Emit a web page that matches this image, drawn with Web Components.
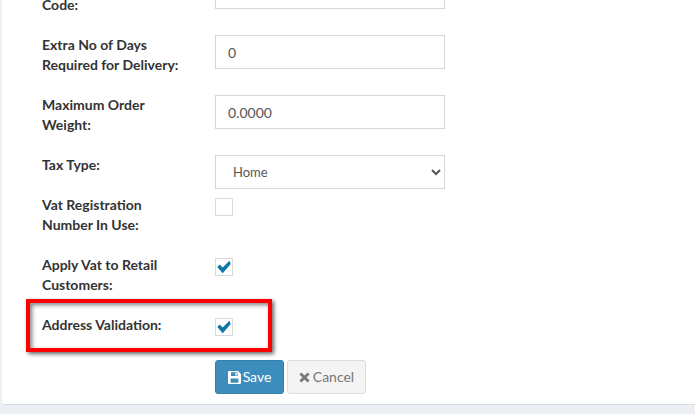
<!DOCTYPE html>
<html lang="en">
<head>
<meta charset="utf-8">
<title>Settings form</title>
<style>
  html, body { margin: 0; height: 414px; overflow: hidden; background: #ecf0f5; }
  body { font: 14px/20px Lato, "Noto Sans", sans-serif; color: #333; }
</style>
</head>
<body>
<form-card>
  <form-row tall><span class="low">Code:</span><text-field value=""></text-field></form-row>
  <form-row tall><span>Extra No of Days Required for Delivery:</span><text-field value="0"></text-field></form-row>
  <form-row tall><span>Maximum Order Weight:</span><text-field value="0.0000"></text-field></form-row>
  <form-row><span>Tax Type:</span><select-field value="Home"></select-field></form-row>
  <form-row tall><span>Vat Registration Number In Use:</span><check-box></check-box></form-row>
  <form-row tall><span>Apply Vat to Retail Customers:</span><check-box checked></check-box></form-row>
  <form-row last>
    <span>Address Validation:</span><check-box checked></check-box>
    <red-mark></red-mark>
  </form-row>
  <button-bar>
    <action-button kind="save">Save</action-button>
    <action-button kind="cancel">Cancel</action-button>
  </button-bar>
</form-card>

<script>
class FormCard extends HTMLElement {
  constructor() {
    super();
    this.attachShadow({ mode: 'open' }).innerHTML = `
      <style>
        :host { display: block; box-sizing: border-box; height: 430px; margin: -25px 0 0 2px;
          padding: 0 0 10px 40px; background: #fff; border-radius: 0 0 0 3px;
          border-bottom: 1px solid #d8dce2; }
      </style>
      <slot></slot>`;
  }
}

class FormRow extends HTMLElement {
  constructor() {
    super();
    this.attachShadow({ mode: 'open' }).innerHTML = `
      <style>
        :host { display: grid; grid-template-columns: 173px 230px; align-items: start;
          position: relative; min-height: 40px; }
        :host([tall]) { margin-bottom: 20px; }
        :host([last]) { min-height: 20px; margin-bottom: 25px; }
        ::slotted(span) { font-weight: 700; color: #333; padding-right: 20px; }
        ::slotted(span.low) { padding-top: 20px; }
      </style>
      <slot></slot>`;
  }
}

class TextField extends HTMLElement {
  constructor() {
    super();
    this.attachShadow({ mode: 'open' }).innerHTML = `
      <style>
        :host { display: block; }
        input { display: block; box-sizing: border-box; width: 230px; height: 34px; padding: 6px 12px;
          border: 1px solid #d2d6de; border-radius: 0; outline: 0; background: #fff;
          font: 14px/20px Lato, "Noto Sans", sans-serif; color: #555; }
      </style>
      <input type="text">`;
    this.shadowRoot.querySelector('input').setAttribute('value', this.getAttribute('value') || '');
  }
}

class SelectField extends HTMLElement {
  constructor() {
    super();
    this.attachShadow({ mode: 'open' }).innerHTML = `
      <style>
        :host { display: block; }
        select { display: block; box-sizing: border-box; width: 230px; height: 34px; padding: 6px 12px 6px 13px;
          border: 1px solid #d2d6de; border-radius: 0; outline: 0; background: #fff;
          font: 13px/20px Lato, "Noto Sans", sans-serif; color: #555; }
      </style>
      <select><option></option></select>`;
    this.shadowRoot.querySelector('option').textContent = this.getAttribute('value');
  }
}

class CheckBox extends HTMLElement {
  constructor() {
    super();
    const mark = this.hasAttribute('checked')
      ? '<svg viewBox="0 0 16 16" width="16" height="16"><path d="M1.3 8 3.6 5.4 6.7 8.4 13.4 1.7 14.7 5 6.7 14.3Z" fill="#0e76a8"/></svg>'
      : '';
    this.attachShadow({ mode: 'open' }).innerHTML = `
      <style>
        :host { display: flex; box-sizing: border-box; width: 18px; height: 18px; margin-top: 3px;
          border: 1px solid #dadada; background: #fff; }
        svg { display: block; }
      </style>${mark}`;
  }
}

class RedMark extends HTMLElement {
  constructor() {
    super();
    this.attachShadow({ mode: 'open' }).innerHTML = `
      <style>
        :host { position: absolute; left: -16px; top: -16px; box-sizing: border-box; width: 246px; height: 53px;
          border: 4px solid #f00; box-shadow: 2px 2px 4px rgba(0,0,0,.6), inset 2px 2px 4px rgba(0,0,0,.5); }
      </style>`;
  }
}

class ButtonBar extends HTMLElement {
  constructor() {
    super();
    this.attachShadow({ mode: 'open' }).innerHTML = `
      <style>
        :host { display: flex; gap: 3px; margin: -1px 0 0 173px; }
      </style>
      <slot></slot>`;
  }
}

const ACTION_ICONS = {
  save: '<svg viewBox="0 0 13 13" width="13" height="13"><path fill-rule="evenodd" d="M1 0H10L13 3V12A1 1 0 0 1 12 13H1A1 1 0 0 1 0 12V1A1 1 0 0 1 1 0ZM3 1.2V5H9.6V1.2ZM7.4 1.7H8.8V4.4H7.4ZM2.6 7.4V11.8H10.4V7.4Z" fill="currentColor"/></svg>',
  cancel: '<svg viewBox="0 0 11 11" width="11" height="11"><path d="M2.4.4 5.5 3.5 8.6.4 10.6 2.4 7.5 5.5 10.6 8.6 8.6 10.6 5.5 7.5 2.4 10.6.4 8.6 3.5 5.5.4 2.4Z" fill="currentColor"/></svg>'
};

class ActionButton extends HTMLElement {
  constructor() {
    super();
    this.attachShadow({ mode: 'open' }).innerHTML = `
      <style>
        :host { display: inline-flex; align-items: center; justify-content: center; gap: 2px;
          box-sizing: border-box; height: 34px; border: 1px solid; border-radius: 3px; font-size: 14px; }
        :host([kind=save]) { width: 69px; background: #3c8dbc; border-color: #367fa9; color: #fff; }
        :host([kind=cancel]) { width: 79px; gap: 3px; background: #f4f4f4; border-color: #ddd; color: #777; }
        svg { display: block; }
      </style>
      ${ACTION_ICONS[this.getAttribute('kind')]}<slot></slot>`;
  }
}

customElements.define('form-card', FormCard);
customElements.define('form-row', FormRow);
customElements.define('text-field', TextField);
customElements.define('select-field', SelectField);
customElements.define('check-box', CheckBox);
customElements.define('red-mark', RedMark);
customElements.define('button-bar', ButtonBar);
customElements.define('action-button', ActionButton);
</script>
</body>
</html>
